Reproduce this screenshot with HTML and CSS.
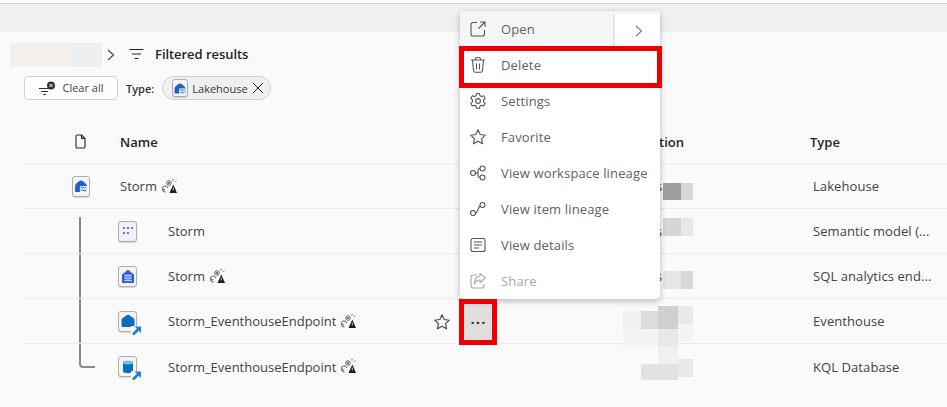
FILE: index.html
```html
<!DOCTYPE html>
<html lang="en">
<head>
<meta charset="utf-8">
<title>Filtered results</title>
<link rel="stylesheet" href="styles.css">
</head>
<body>
<svg class="defs" width="0" height="0" aria-hidden="true">
  <symbol id="notebadge" viewBox="0 0 16 16">
    <path d="M6 10A3 3 0 1 0 3.500 14" fill="none" stroke="#555" stroke-width="1"/>
    <path d="M1 10.500l.8 1.700 1.500-1" fill="none" stroke="#555" stroke-width=".9"/>
    <circle cx="7" cy="5" r="2.300" fill="#eee" stroke="#666" stroke-width="1"/>
    <circle cx="7" cy="5" r=".9" fill="#444"/>
    <path d="M11 .8v1.700M14.300 2.500l-1.300 1.300" stroke="#555" stroke-width="1"/>
    <path d="M11.300 6.500l3.700 8.500H7.500z" fill="#1c1c1c"/>
    <path d="M11.300 9.500v3" stroke="#eee" stroke-width=".8"/>
  </symbol>
  <symbol id="arrowbadge" viewBox="0 0 10 10">
    <rect width="10" height="10" fill="#fff" opacity=".9"/>
    <path d="M10 .5H3.500L5.800 2.800 1 7.600 2.900 9.500 7.700 4.700 10 7z" fill="#1f7fd1"/>
  </symbol>
  <symbol id="staricon" viewBox="0 0 18 18">
    <path d="M9 1.800l2.200 4.700 5.100.7-3.700 3.500.9 5.100L9 13.300l-4.500 2.500.9-5.100-3.700-3.500 5.100-.7z" fill="none" stroke="currentColor" stroke-width="1.100" stroke-linejoin="round"/>
  </symbol>
</svg>

<div class="topstrip"></div>

<main class="page">
  <div class="crumbs">
    <span class="crumb-blur"></span>
    <svg class="crumb-chevron" width="8" height="12" viewBox="0 0 8 12"><path d="M1 1l5.500 5L1 11" fill="none" stroke="#444" stroke-width="1.100"/></svg>
    <svg class="crumb-filter" width="15" height="12" viewBox="0 0 15 12"><path d="M.5 1.500h14M3 6h9M5.500 10.500h4" stroke="#222" stroke-width="1.200"/></svg>
    <span class="crumb-title">Filtered results</span>
  </div>

  <div class="filters">
    <button class="clear-btn" type="button">
      <svg width="18" height="15" viewBox="0 0 18 15"><path d="M1 7.500h10M3 10.500h7M5 13.500h3" stroke="#333" stroke-width="1.100"/><circle cx="13" cy="4.500" r="4" fill="#333"/><path d="M11.500 3l3 3M14.500 3l-3 3" stroke="#fff" stroke-width="1"/></svg>
      <span class="clear-text">Clear all</span>
    </button>
    <span class="type-label">Type:</span>
    <span class="chip">
      <span class="tile tile-chip">
        <svg width="12" height="13" viewBox="0 0 12 13"><path d="M.5 11.500V6.500Q.5 5.200 2 4L4 2.200Q6 .8 8 2.200L10 4Q11.500 5.200 11.500 6.500V11.500z" fill="#1f62c4"/><path d="M5 6.500h6.500v6H5z" fill="#f2f6fc"/><path d="M5.500 8q1.200-1 2.400 0t2.800 0M5.500 10.500q1.200-1 2.400 0t2.800 0" fill="none" stroke="#1f62c4" stroke-width=".9"/></svg>
      </span>
      <span>Lakehouse</span>
      <svg class="chip-x" width="12" height="12" viewBox="0 0 12 12"><path d="M1 1l10 10M11 1L1 11" stroke="#222" stroke-width="1"/></svg>
    </span>
  </div>

  <section class="table">
    <span class="tree-line"></span>

    <div class="row head">
      <span class="cell-icon">
        <svg width="11" height="15" viewBox="0 0 11 15"><path d="M1 2.500A1.500 1.500 0 0 1 2.500 1h4l3.500 3.500V12.500a1.500 1.500 0 0 1-1.500 1.500h-6A1.500 1.500 0 0 1 1 12.500z M6.500 1v3.500H10" fill="none" stroke="#242424" stroke-width="1.100" stroke-linejoin="round"/></svg>
      </span>
      <span class="cell-name">Name</span>
      <span class="cell-loc">Location</span>
      <span class="cell-type">Type</span>
    </div>

    <div class="row">
      <span class="cell-icon">
        <span class="tile">
          <svg width="14" height="14" viewBox="0 0 12 13"><path d="M.5 11.500V6.500Q.5 5.200 2 4L4 2.200Q6 .8 8 2.200L10 4Q11.500 5.200 11.500 6.500V11.500Q11.500 12 11 12H1Q.5 12 .5 11.500z" fill="#1f62c4"/><path d="M5 6.500h6.500v6H5z" fill="#f2f6fc"/><path d="M5.500 8q1.200-1 2.400 0t2.800 0M5.500 10.500q1.200-1 2.400 0t2.800 0" fill="none" stroke="#1f62c4" stroke-width=".9"/></svg>
        </span>
      </span>
      <span class="cell-name">Storm<svg class="note"><use href="#notebadge"/></svg></span>
      <span class="cell-loc"><span class="loc-text">s</span></span>
      <span class="cell-type val">Lakehouse</span>
    </div>

    <div class="row">
      <span class="cell-icon"></span>
      <span class="cell-name child">
        <span class="tile tile-child tile-purple">
          <svg width="14" height="12" viewBox="0 0 14 12" fill="#6b4cb8"><circle cx="3" cy="3" r="1.100"/><circle cx="7" cy="3" r="1.100"/><circle cx="11" cy="3" r="1.100"/><circle cx="3" cy="8" r="1.100"/><circle cx="7" cy="8" r="1.100"/></svg>
        </span>
        <span>Storm</span>
      </span>
      <span class="cell-loc"><span class="loc-text">s</span></span>
      <span class="cell-type val">Semantic model (...</span>
    </div>

    <div class="row">
      <span class="cell-icon"></span>
      <span class="cell-name child">
        <span class="tile tile-child">
          <svg width="14" height="15" viewBox="0 0 14 15"><path d="M1 5.500L7 .8l6 4.700V13a1 1 0 0 1-1 1H2a1 1 0 0 1-1-1z" fill="#2f5fd0"/><path d="M3 6.500h8M3 9h8M3 11.500h8M5 5v7.500M7 5v7.500M9 5v7.500" stroke="#dbe5fa" stroke-width=".7"/></svg>
        </span>
        <span>Storm</span>
        <svg class="note"><use href="#notebadge"/></svg>
      </span>
      <span class="cell-loc"><span class="loc-text">s</span></span>
      <span class="cell-type val">SQL analytics end...</span>
    </div>

    <div class="row">
      <span class="cell-icon"></span>
      <span class="cell-name child">
        <span class="tile tile-child">
          <svg width="14" height="14" viewBox="0 0 14 14"><path d="M.5 6Q.5 5 1.500 4.200L5.500 1.300Q7 .3 8.500 1.300L12.500 4.200Q13.500 5 13.500 6V11.500a1.500 1.500 0 0 1-1.500 1.500H2a1.500 1.500 0 0 1-1.500-1.500z" fill="#0b6cb8"/></svg>
          <svg class="arrow"><use href="#arrowbadge"/></svg>
        </span>
        <span>Storm_EventhouseEndpoint</span>
        <svg class="note"><use href="#notebadge"/></svg>
      </span>
      <svg class="row-star"><use href="#staricon"/></svg>
      <span class="more"><span class="more-dots">···</span></span>
      <span class="cell-type val">Eventhouse</span>
    </div>

    <div class="row last">
      <span class="cell-icon"></span>
      <span class="cell-name child">
        <span class="tile tile-child">
          <svg width="12" height="14" viewBox="0 0 12 14"><path d="M1 2.500v9c0 2 10 2 10 0v-9z" fill="#0b6cb8"/><ellipse cx="6" cy="2.500" rx="5" ry="1.900" fill="#6cc0ee"/></svg>
          <svg class="arrow"><use href="#arrowbadge"/></svg>
        </span>
        <span>Storm_EventhouseEndpoint</span>
        <svg class="note"><use href="#notebadge"/></svg>
      </span>
      <span class="cell-type val">KQL Database</span>
    </div>

    <div class="mosaic" aria-hidden="true">
      <i class="m r1a"></i><i class="m r1b"></i>
      <i class="m r2a"></i><i class="m r2b"></i>
      <i class="m r3a"></i><i class="m r3b"></i>
      <i class="m a"></i><i class="m b"></i><i class="m c"></i><i class="m d"></i><i class="m e"></i><i class="m f"></i><i class="m g"></i><i class="m h"></i><i class="m i"></i><i class="m j"></i>
    </div>
  </section>
</main>

<nav class="menu">
  <div class="mi open">
    <svg class="mi-ic" viewBox="0 0 18 18"><path d="M8 2.500H4A2 2 0 0 0 2 4.500V14a2 2 0 0 0 2 2h9.500a2 2 0 0 0 2-2v-4M11 2h5v5M16 2l-6.500 6.500" fill="none" stroke="#555" stroke-width="1.100"/></svg>
    <span>Open</span>
    <span class="open-split"><svg width="8" height="12" viewBox="0 0 8 12"><path d="M1 1l5.500 5L1 11" fill="none" stroke="#777" stroke-width="1.100"/></svg></span>
  </div>
  <div class="mi">
    <svg class="mi-ic" viewBox="0 0 18 18"><path d="M2 4h14M6.500 4V3a1.500 1.500 0 0 1 1.500-1.500h2A1.500 1.500 0 0 1 11.500 3v1M3.500 4l1 10.500a2 2 0 0 0 2 1.800h5a2 2 0 0 0 2-1.800l1-10.500M7.500 7.500v6M10.500 7.500v6" fill="none" stroke="#555" stroke-width="1.100"/></svg>
    <span>Delete</span>
  </div>
  <div class="mi">
    <svg class="mi-ic" viewBox="0 0 18 18"><path d="M7.500 1.500h3l.5 2.300 1.500.8 2.200-.8 1.500 2.600-1.700 1.600v1.800l1.700 1.600-1.500 2.600-2.200-.8-1.500.8-.5 2.300h-3l-.5-2.300-1.500-.8-2.200.8-1.500-2.600 1.700-1.600V8L1.800 6.400l1.500-2.600 2.200.8L7 3.800z" fill="none" stroke="#555" stroke-width="1.100" stroke-linejoin="round"/><circle cx="9" cy="9" r="2.400" fill="none" stroke="#555" stroke-width="1.100"/></svg>
    <span>Settings</span>
  </div>
  <div class="mi">
    <svg class="mi-ic star-ic"><use href="#staricon"/></svg>
    <span>Favorite</span>
  </div>
  <div class="mi">
    <svg class="mi-ic" viewBox="0 0 18 18"><circle cx="4" cy="9" r="2.500" fill="none" stroke="#555" stroke-width="1.100"/><circle cx="13.500" cy="4.500" r="2.500" fill="none" stroke="#555" stroke-width="1.100"/><circle cx="13.500" cy="13.500" r="2.500" fill="none" stroke="#555" stroke-width="1.100"/><path d="M6.500 9H9V6c0-1 .8-1.500 2-1.500M9 9v3c0 1 .8 1.500 2 1.500" fill="none" stroke="#555" stroke-width="1.100"/></svg>
    <span>View workspace lineage</span>
  </div>
  <div class="mi">
    <svg class="mi-ic" viewBox="0 0 18 18"><circle cx="4" cy="13" r="2.500" fill="none" stroke="#555" stroke-width="1.100"/><circle cx="13.500" cy="5" r="2.500" fill="none" stroke="#555" stroke-width="1.100"/><path d="M6.500 13c2.500 0 2-5 4.500-7" fill="none" stroke="#555" stroke-width="1.100"/></svg>
    <span>View item lineage</span>
  </div>
  <div class="mi">
    <svg class="mi-ic" viewBox="0 0 18 18"><rect x="2" y="2.500" width="14" height="13" rx="2" fill="none" stroke="#555" stroke-width="1.100"/><path d="M5 6h8M5 9h8M5 12h5" stroke="#555" stroke-width="1.100"/></svg>
    <span>View details</span>
  </div>
  <div class="mi disabled">
    <svg class="mi-ic" viewBox="0 0 18 18"><path d="M8 3H4a2 2 0 0 0-2 2v9a2 2 0 0 0 2 2h9a2 2 0 0 0 2-2v-2" fill="none" stroke="#aaa" stroke-width="1.100"/><path d="M11 1.500L16.500 6 11 10.500V8C8 8 6.500 9.500 5.500 12 5.500 8 7.500 4.500 11 4z" fill="none" stroke="#aaa" stroke-width="1.100" stroke-linejoin="round"/></svg>
    <span>Share</span>
  </div>
</nav>

<span class="callout callout-delete"></span>
<span class="callout callout-more"></span>
</body>
</html>
```
FILE: styles.css
```css
* { box-sizing: border-box; }
html, body { margin: 0; padding: 0; }
body {
  width: 947px;
  height: 407px;
  overflow: hidden;
  position: relative;
  background: #fafafa;
  color: #424242;
  font-family: "Open Sans", "Noto Sans", sans-serif;
  font-size: 13px;
}
.defs { position: absolute; }
.topstrip {
  height: 29px;
  margin-top: 3px;
  background: #f0f0f0;
  border-top: 1px solid #d2d2d2;
}
.page { display: flex; flex-direction: column; }

.crumbs { display: flex; align-items: center; height: 24px; margin-top: 11px; padding-left: 10px; }
.crumb-blur {
  width: 92px; height: 24px;
  background: linear-gradient(90deg, #f3efec 0 62px, #eeeff0 62px);
}
.crumb-chevron { margin-left: 5px; }
.crumb-filter { margin-left: 14px; margin-bottom: 2px; }
.crumb-title { margin-left: 11px; margin-bottom: 2px; font-size: 13px; letter-spacing: -.05px; font-weight: 600; color: #242424; }

.filters { display: flex; align-items: center; margin-top: 9px; padding-left: 24px; height: 24px; }
.clear-btn {
  display: flex; align-items: center; justify-content: center; gap: 6px;
  width: 94px; height: 24px; padding: 0;
  background: #fff; border: 1px solid #d1d1d1; border-radius: 4px;
  font: inherit; font-size: 11px; color: #424242;
}
.clear-text { margin-bottom: 2px; }
.type-label { margin-left: 8px; font-size: 11px; font-weight: 600; color: #333; }
.chip {
  display: inline-flex; align-items: center;
  margin-left: 8px; height: 24px; width: 109px; padding-left: 9px;
  background: #f0f0f0; border: 1px solid #d1d1d1; border-radius: 12px;
  font-size: 11px; color: #333;
}
.chip-x { margin-left: 4px; }
.tile {
  display: inline-flex; align-items: center; justify-content: center;
  position: relative;
  width: 18px; height: 21px;
  background: #f4f4f4; border: 1px solid #aeaeae; border-radius: 3px;
  box-shadow: 0 1px 1px rgba(0,0,0,.15);
}
.tile-chip { width: 16px; height: 18px; margin-right: 4px; }
.tile-child { width: 19px; height: 21px; flex: none; margin-right: 31px; }
.tile-purple { background: #f1eff8; }
.arrow { position: absolute; right: -5px; bottom: -5px; width: 10px; height: 10px; }

.table { position: relative; margin-top: 20px; }
.row {
  display: grid;
  grid-template-columns: 96px 510px 180px 1fr;
  align-items: center;
  position: relative;
  height: 45px;
  margin-left: 24px;
  border-bottom: 1px solid #ebebeb;
}
.row.last { border-bottom: 0; }
.row.head { height: 44px; font-weight: 600; color: #242424; }
.cell-icon { display: flex; justify-content: center; width: 96px; padding-left: 18px; }
.row.head .cell-icon { padding-left: 16px; }
.cell-name { display: flex; align-items: center; grid-column: 2; white-space: nowrap; }
.child { margin-left: -2px; }
.note { width: 16px; height: 16px; margin-left: 5px; margin-bottom: 1px; }
.cell-loc { grid-column: 3; display: flex; align-items: center; }
.cell-type { grid-column: 4; }
.cell-type.val { padding-left: 3px; letter-spacing: .08px; }
.loc-text { margin-left: 26px; }

.row-star { position: absolute; left: 409px; top: 14px; width: 18px; height: 18px; color: #444; }
.more {
  position: absolute; left: 440px; top: 5px;
  width: 29px; height: 36px;
  display: flex; align-items: center; justify-content: center;
  background: #e0dfdd;
}
.more-dots { font-weight: 700; font-size: 15px; letter-spacing: 1px; color: #333; }

.tree-line {
  position: absolute;
  left: 79px; top: 97px;
  width: 16px; height: 151px;
  border-left: 2px solid #8a8a8a;
  border-bottom: 2px solid #8a8a8a;
  border-bottom-left-radius: 4px;
}

.mosaic { position: absolute; left: 0; top: 0; }
.m { position: absolute; display: block; }
.r1a { left: 663px; top: 63px; width: 18px; height: 17px; background: #9f9f9f; }
.r1b { left: 681px; top: 63px; width: 12px; height: 17px; background: #d8d8d8; }
.r2a { left: 663px; top: 98px; width: 18px; height: 18px; background: #d6d6d6; }
.r2b { left: 681px; top: 98px; width: 12px; height: 18px; background: #e8e8e8; }
.r3a { left: 663px; top: 151px; width: 18px; height: 18px; background: #e6e6e6; }
.r3b { left: 681px; top: 151px; width: 12px; height: 18px; background: #d9d9d9; }
.a { left: 623px; top: 191px; width: 18px; height: 18px; background: #f1f1f1; }
.b { left: 641px; top: 191px; width: 17px; height: 18px; background: #dcdcdc; }
.c { left: 658px; top: 186px; width: 20px; height: 23px; background: #d0d0d0; }
.d { left: 678px; top: 186px; width: 15px; height: 18px; background: #e9e9e9; }
.e { left: 623px; top: 209px; width: 35px; height: 17px; background: #f4f4f4; }
.f { left: 658px; top: 209px; width: 20px; height: 17px; background: #e8e8e8; }
.g { left: 658px; top: 226px; width: 20px; height: 18px; background: #f0f0f0; }
.h { left: 641px; top: 244px; width: 37px; height: 16px; background: #e2e2e2; }
.i { left: 678px; top: 239px; width: 15px; height: 18px; background: #e9e9e9; }
.j { left: 678px; top: 204px; width: 15px; height: 17px; background: #f4f4f4; }

.menu {
  position: absolute;
  left: 460px; top: 11px;
  width: 200px; height: 288px;
  background: #fff;
  border-radius: 4px;
  box-shadow: 0 2px 6px rgba(0,0,0,.28);
  overflow: hidden;
}
.mi {
  display: flex; align-items: center;
  position: relative;
  height: 36px;
  padding-left: 41px;
  color: #616161;
  font-size: 13px;
  letter-spacing: .14px;
  white-space: nowrap;
}
.mi-ic { position: absolute; left: 9px; top: 9px; width: 18px; height: 18px; color: #555; }
.mi.open { background: #f5f5f5; }
.open-split {
  position: absolute; right: 0; top: 3px;
  width: 47px; height: 33px;
  padding-left: 3px;
  display: flex; align-items: center; justify-content: center;
  background: #fff;
  border-left: 2px solid #e3e3e3;
}
.mi.disabled { color: #a8a8a8; }

.callout { position: absolute; border: 5px solid #ee0000; }
.callout-delete { left: 459px; top: 46px; width: 203px; height: 42px; }
.callout-more { left: 459px; top: 299px; width: 38px; height: 46px; }
```
